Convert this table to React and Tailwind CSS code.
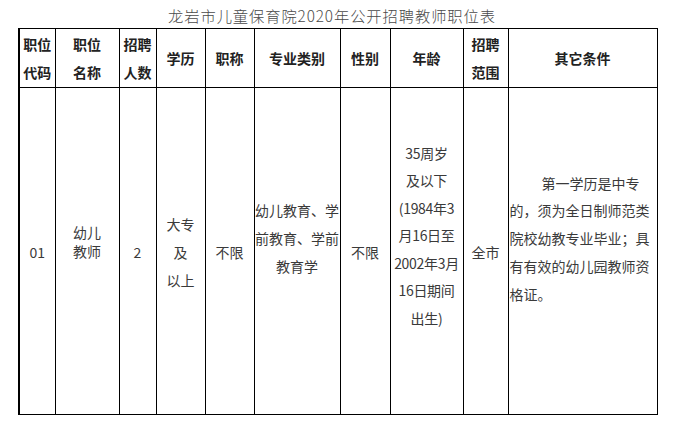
import React from "react";

const cols = [36, 64, 37, 49, 49, 86, 50, 73, 45, 149];

const headers = [
  ["职位", "代码"],
  ["职位", "名称"],
  ["招聘", "人数"],
  ["学历"],
  ["职称"],
  ["专业类别"],
  ["性别"],
  ["年龄"],
  ["招聘", "范围"],
  ["其它条件"],
];

function Lines({ lines, className = "" }) {
  return (
    <div className={className}>
      {lines.map((l, i) => (
        <div key={i}>{l}</div>
      ))}
    </div>
  );
}

export default function App() {
  const sans = { fontFamily: '"Noto Sans CJK SC", "Liberation Sans", sans-serif' };
  return (
    <div className="w-[680px] h-[426px] bg-white overflow-hidden" style={sans}>
      {/* title */}
      <div
        className="h-[28px] pt-[3px] pr-[16px] flex items-center justify-center text-[15.3px] text-[#4a4a4a] font-light tracking-[0.9px]"
        style={{ fontFamily: '"Noto Sans CJK SC", "Liberation Serif", serif' }}
      >
        龙岩市儿童保育院2020年公开招聘教师职位表
      </div>

      <div className="pl-[18px]">
        <table className="table-fixed border-collapse border-l-2 border-black text-[14px]">
          <colgroup>
            {cols.map((w, i) => (
              <col key={i} style={{ width: w }} />
            ))}
          </colgroup>
          <thead>
            <tr className="h-[59px]">
              {headers.map((h, i) => (
                <th
                  key={i}
                  className="border-[1.5px] border-black p-0 font-bold text-[#222] leading-[28px] text-center align-middle"
                >
                  {h.map((t, j) => (
                    <div key={j}>{t}</div>
                  ))}
                </th>
              ))}
            </tr>
          </thead>
          <tbody className="text-[#3a3a3a]">
            <tr className="h-[327px]">
              <td className="border-[1.5px] border-black p-0 text-center align-middle pt-[2px]">01</td>
              <td className="border-[1.5px] border-black p-0 text-center align-middle">
                <Lines lines={["幼儿", "教师"]} className="leading-[19px] pb-[18px]" />
              </td>
              <td className="border-[1.5px] border-black p-0 text-center align-middle pt-[2px]">2</td>
              <td className="border-[1.5px] border-black p-0 text-center align-middle">
                <Lines lines={["大专", "及", "以上"]} className="leading-[28px] pt-[2px]" />
              </td>
              <td className="border-[1.5px] border-black p-0 text-center align-middle pt-[2px]">不限</td>
              <td className="border-[1.5px] border-black p-0 text-center align-middle">
                <Lines
                  lines={["幼儿教育、学", "前教育、学前", "教育学"]}
                  className="leading-[28px] pb-[26px]"
                />
              </td>
              <td className="border-[1.5px] border-black p-0 text-center align-middle pt-[2px]">不限</td>
              <td className="border-[1.5px] border-black p-0 text-center align-middle">
                <Lines
                  lines={["35周岁", "及以下", "(1984年3", "月16日至", "2002年3月", "16日期间", "出生)"]}
                  className="leading-[27.5px] pb-[30px] tracking-[-0.3px]"
                />
              </td>
              <td className="border-[1.5px] border-black p-0 text-center align-middle pt-[2px]">全市</td>
              <td className="border-[1.5px] border-black p-0 align-middle">
                <div className="leading-[27.7px] pb-[24px] pl-[1px] pr-[6px] indent-[32px]">
                  第一学历是中专的，须为全日制师范类院校幼教专业毕业；具有有效的幼儿园教师资格证。
                </div>
              </td>
            </tr>
          </tbody>
        </table>
      </div>
    </div>
  );
}
